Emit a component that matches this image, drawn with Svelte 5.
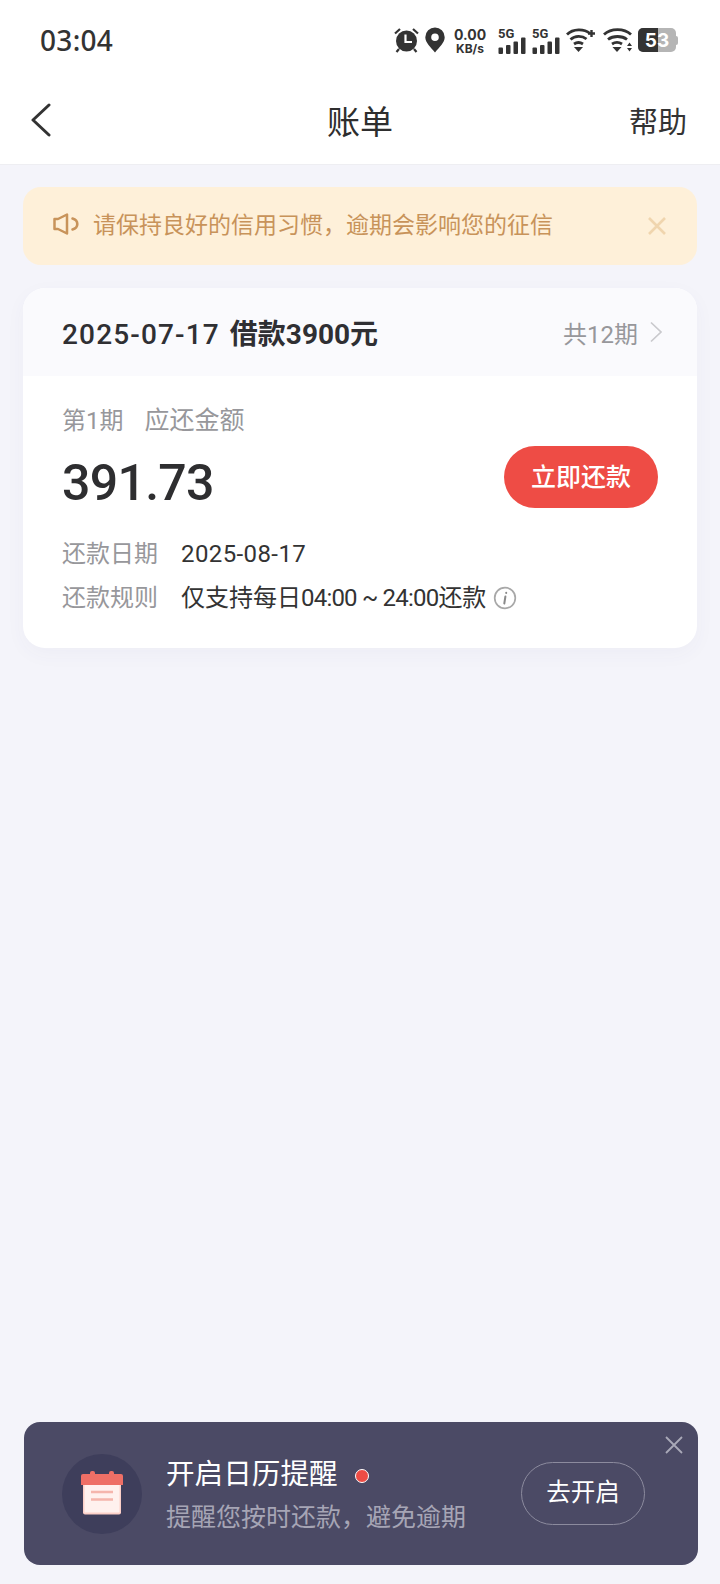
<script>
  const rows = [
    { label: "还款日期", parts: [{ text: "2025-08-17", num: true }] },
    {
      label: "还款规则",
      parts: [{ text: "仅支持每日" }, { text: "04:00 ~ 24:00", num: true }, { text: "还款" }],
      info: true
    }
  ];
</script>

<div class="page">
  <div class="status">
    <span class="time">03:04</span>
    <div class="status-icons">
      <svg class="alarm" width="25" height="26" viewBox="0 0 25 26" fill="#333">
        <circle cx="12.500" cy="14" r="10.500"/>
        <path d="M1 6.500L6 2M24 6.500L19 2M5 22l-2.500 3M20 22l2.500 3" stroke="#333" stroke-width="2.200" fill="none"/>
        <path d="M11.500 7.500v7.500h6.500" stroke="#fff" stroke-width="2.200" fill="none"/>
      </svg>
      <svg class="pin" width="20" height="26" viewBox="0 0 20 26" fill="#333">
        <path fill-rule="evenodd" d="M10 .5a9.700 9.700 0 0 1 9.700 9.700c0 5.500-5.500 10-9.700 15.300C5.800 20.200.3 15.700.3 10.200A9.700 9.700 0 0 1 10 .5zm0 6a3.800 3.800 0 1 0 0 7.600 3.800 3.800 0 0 0 0-7.600z"/>
      </svg>
      <div class="speed"><span>0.00</span><span class="unit">KB/s</span></div>
      {#each [0, 1] as sim}
        <div class="signal">
          <span>5G</span>
          <svg width="28" height="17" viewBox="0 0 28 17" fill="#333">
            <rect x="0.500" y="10.500" width="4.500" height="6.500" rx="1"/>
            <rect x="8" y="8" width="4.500" height="9" rx="1"/>
            <rect x="15.500" y="4.500" width="4.500" height="12.500" rx="1"/>
            <rect x="23" y="0.500" width="4.500" height="16.500" rx="1"/>
          </svg>
        </div>
      {/each}
      <svg class="wifi" width="29" height="26" viewBox="0 0 29 26" fill="none" stroke="#333" stroke-width="2.800">
        <path d="M1 7.500C7 1.500 18 1.500 24 6.500"/>
        <path d="M4.500 12.500C9 8.500 16 8.500 20.500 12"/>
        <path d="M8 17c3-2 6-2 9 0"/>
        <path d="M8 20h9l-4.500 5z" fill="#333" stroke="none"/>
        <path d="M22 6.500h7M25.500 3v7" stroke-width="2.400"/>
      </svg>
      <svg class="wifi wifi-two" width="29" height="26" viewBox="0 0 29 26" fill="none" stroke="#333" stroke-width="2.800">
        <path d="M1 7.500C8 1 21 1 28 7.500"/>
        <path d="M5 12.500C10 8.500 19 8.500 24 12.500"/>
        <path d="M9 17c3-2 7-2 10 0"/>
        <path d="M9.500 20h9l-4.500 5z" fill="#333" stroke="none"/>
        <path d="M24 19l2.500-3.500 2.500 3.500zM24 21l2.500 3.500 2.500-3.500z" fill="#333" stroke="none"/>
      </svg>
      <div class="battery">
        <div class="batt-body"><span class="batt-fill"></span><span class="batt-num">53</span></div>
        <span class="batt-cap"></span>
      </div>
    </div>
  </div>

  <header class="nav">
    <svg class="back" width="24" height="34" viewBox="0 0 24 34" fill="none" stroke="#333" stroke-width="3" stroke-linecap="round" stroke-linejoin="round">
      <path d="M20 2L4 17l16 15"/>
    </svg>
    <h1>账单</h1>
    <span class="help">帮助</span>
  </header>

  <main class="content">
    <div class="notice">
      <svg class="speaker" width="27" height="22" viewBox="0 0 27 22" fill="none" stroke="#c8935a" stroke-width="2.500" stroke-linejoin="round" stroke-linecap="round">
        <path d="M1.500 6h3.500L14 1.500v19L5 16H1.500z"/>
        <path d="M19.500 5.500c3.500 1 4.800 3 4.800 5.500s-1.300 4.500-4.800 5.500" stroke-width="2.600"/>
      </svg>
      <span class="notice-text">请保持良好的信用习惯，逾期会影响您的征信</span>
      <svg class="notice-close" width="20" height="20" viewBox="0 0 20 20" stroke="#f0d5ae" stroke-width="2.600" fill="none">
        <path d="M2 2l16 16M18 2L2 18"/>
      </svg>
    </div>

    <section class="card">
      <div class="card-head">
        <div class="loan"><span class="loan-date">2025-07-17</span><b>借款3900元</b></div>
        <div class="periods">
          <span>共12期</span>
          <svg width="14" height="22" viewBox="0 0 14 22" fill="none" stroke="#c9c9cd" stroke-width="1.700"><path d="M2 1.500L12 11 2 20.500"/></svg>
        </div>
      </div>
      <div class="card-body">
        <div class="due-label"><span>第1期</span><span class="due-name">应还金额</span></div>
        <div class="due-row">
          <span class="amount">391.73</span>
          <button class="pay">立即还款</button>
        </div>
        <div class="rows">
          {#each rows as row}
            <div class="row">
              <span class="row-label">{row.label}</span>
              <span class="row-value">
                {#each row.parts as part}<span class:num={part.num}>{part.text}</span>{/each}
              </span>
              {#if row.info}
                <svg class="info" width="24" height="24" viewBox="0 0 24 24" fill="none">
                  <circle cx="12" cy="12" r="10.300" stroke="#a8a8a8" stroke-width="1.700"/>
                  <path d="M13.200 6.800v.2M12.400 10.500l-1.100 7" stroke="#8a8a8a" stroke-width="2" stroke-linecap="round"/>
                </svg>
              {/if}
            </div>
          {/each}
        </div>
      </div>
    </section>
  </main>

  <aside class="reminder">
    <div class="cal-circle">
      <svg class="cal" width="42" height="44" viewBox="0 0 42 44">
        <rect x="2" y="10" width="38" height="33.500" rx="2" fill="#fcd0c8"/>
        <rect x="3.500" y="10" width="35" height="31.500" fill="#fff1ee"/>
        <path d="M0 5a2 2 0 0 1 2-2h38a2 2 0 0 1 2 2v9H0z" fill="#ee6f66"/>
        <rect x="9" y="0" width="5" height="6" rx="2" fill="#ee6f66"/>
        <rect x="28" y="0" width="5" height="6" rx="2" fill="#ee6f66"/>
        <path d="M10 21h22M10 28.500h22" stroke="#f5b5ac" stroke-width="2.600"/>
      </svg>
    </div>
    <div class="reminder-text">
      <div class="reminder-title"><span>开启日历提醒</span><i class="dot"></i></div>
      <div class="reminder-sub">提醒您按时还款，避免逾期</div>
    </div>
    <button class="enable">去开启</button>
    <svg class="reminder-close" width="20" height="20" viewBox="0 0 20 20" stroke="#a9a9b8" stroke-width="1.800" fill="none">
      <path d="M2 2l16 16M18 2L2 18"/>
    </svg>
  </aside>
</div>

<style>
  :global(body) {
    margin: 0;
    background: #f4f4fa;
  }

  .page {
    width: 720px;
    height: 1584px;
    display: flex;
    flex-direction: column;
    background: #f4f4fa;
    color: #333;
    font-family: "Roboto", "Noto Sans CJK SC", sans-serif;
    overflow: hidden;
  }

  /* status bar */
  .status {
    height: 80px;
    box-sizing: border-box;
    padding: 0 42px 0 40px;
    background: #fff;
    display: flex;
    align-items: center;
    justify-content: space-between;
  }
  .time {
    font-family: "Noto Sans", sans-serif;
    font-size: 28px;
    font-weight: 500;
    letter-spacing: 0.300px;
    color: #333;
  }
  .status-icons {
    display: flex;
    align-items: center;
  }
  .pin {
    margin-left: 6px;
  }
  .speed {
    display: flex;
    flex-direction: column;
    align-items: center;
    width: 32px;
    margin: 0 12px 0 9px;
    font-family: "Inter", sans-serif;
    font-weight: 700;
    font-size: 14px;
    line-height: 15px;
    padding-top: 2px;
  }
  .speed .unit {
    font-size: 12px;
    line-height: 14px;
  }
  .signal {
    position: relative;
    width: 28px;
    height: 25px;
    margin-top: 2px;
    margin-right: 6px;
    display: flex;
    align-items: flex-end;
  }
  .signal span {
    position: absolute;
    left: 0;
    top: -2px;
    font-size: 13px;
    line-height: 13px;
    font-weight: 700;
  }
  .wifi-two {
    margin-left: 8px;
  }
  .battery {
    display: flex;
    align-items: center;
    margin-left: 6px;
  }
  .batt-body {
    position: relative;
    width: 38px;
    height: 24px;
    background: #b5b5b5;
    border-radius: 5px;
    overflow: hidden;
    display: flex;
    align-items: center;
    justify-content: center;
  }
  .batt-fill {
    position: absolute;
    left: 0;
    top: 0;
    bottom: 0;
    width: 20px;
    background: #333;
  }
  .batt-num {
    position: relative;
    color: #fff;
    font-size: 19px;
    font-weight: 700;
    font-family: "Inter", sans-serif;
  }
  .batt-cap {
    width: 2px;
    height: 9px;
    background: #b5b5b5;
    border-radius: 0 2px 2px 0;
  }

  /* nav */
  .nav {
    position: relative;
    height: 85px;
    box-sizing: border-box;
    background: #fff;
    border-bottom: 1px solid #eeeef2;
    display: flex;
    align-items: center;
    justify-content: center;
  }
  .back {
    position: absolute;
    left: 29px;
    top: 23px;
  }
  h1 {
    margin: 0 0 4px 0;
    font-size: 33px;
    font-weight: 400;
    line-height: 40px;
    color: #2e2e2e;
    font-family: "Noto Sans CJK SC", sans-serif;
  }
  .help {
    position: absolute;
    right: 33px;
    top: 23px;
    font-size: 29px;
    line-height: 40px;
    color: #333;
  }

  .content {
    flex: 1;
    padding: 22px 23px 0 23px;
    display: flex;
    flex-direction: column;
    gap: 23px;
  }

  .notice {
    height: 78px;
    box-sizing: border-box;
    padding: 0 30px 0 30px;
    background: #fef0d9;
    border-radius: 18px;
    display: flex;
    align-items: center;
    color: #c8935a;
  }
  .speaker {
    margin-bottom: 5px;
  }
  .notice-text {
    flex: 1;
    margin-left: 13px;
    font-size: 23px;
    line-height: 32px;
  }

  .card {
    background: #fff;
    border-radius: 22px;
    box-shadow: 0 6px 20px rgba(80, 80, 130, 0.04);
    overflow: hidden;
  }
  .card-head {
    height: 88px;
    box-sizing: border-box;
    padding: 0 34px 0 39px;
    background: #fafafd;
    display: flex;
    align-items: center;
    justify-content: space-between;
  }
  .loan {
    display: flex;
    align-items: baseline;
    font-size: 28px;
    color: #2f2f33;
    font-weight: 500;
  }
  .loan-date {
    letter-spacing: 1.150px;
    margin-right: 10px;
  }
  .loan b {
    font-weight: 700;
  }
  .periods {
    display: flex;
    align-items: center;
    gap: 11px;
    font-size: 24px;
    color: #97979b;
  }
  .card-body {
    padding: 28px 39px 33px 39px;
  }
  .due-label {
    display: flex;
    gap: 21px;
    font-size: 24px;
    line-height: 34px;
    color: #97979b;
  }
  .due-name {
    font-size: 25px;
  }
  .due-row {
    display: flex;
    align-items: center;
    justify-content: space-between;
    margin-top: 10px;
    margin-bottom: 19px;
  }
  .amount {
    font-size: 50px;
    line-height: 70px;
    font-weight: 500;
    letter-spacing: -0.700px;
    color: #2e2e30;
  }
  .pay {
    width: 154px;
    height: 62px;
    margin-top: -12px;
    border: none;
    border-radius: 31px;
    background: #ee4c45;
    color: #fff;
    font-family: inherit;
    font-size: 25px;
    font-weight: 500;
    padding: 0 0 4px 0;
  }
  .rows {
    display: flex;
    flex-direction: column;
    gap: 10px;
  }
  .row {
    display: flex;
    align-items: baseline;
    height: 34px;
    line-height: 34px;
    font-size: 24px;
  }
  .row-label {
    width: 119px;
    color: #97979b;
  }
  .row-value {
    color: #333;
  }
  .num {
    letter-spacing: 0.400px;
  }
  .row:last-child .num {
    letter-spacing: -0.800px;
  }
  .info {
    align-self: center;
    margin-left: 7px;
  }

  /* bottom banner */
  .reminder {
    position: relative;
    height: 143px;
    margin: 0 22px 19px 24px;
    box-sizing: border-box;
    padding: 0 53px 0 38px;
    border-radius: 16px;
    background: #4b4a65;
    display: flex;
    align-items: center;
  }
  .cal-circle {
    width: 80px;
    height: 80px;
    border-radius: 50%;
    background: #3e3e5b;
    display: flex;
    align-items: center;
    justify-content: center;
  }
  .cal {
    margin-bottom: 2px;
  }
  .reminder-text {
    flex: 1;
    margin-left: 24px;
    padding-top: 2px;
  }
  .reminder-title {
    display: flex;
    align-items: center;
    color: #fff;
    font-size: 28.600px;
    line-height: 40px;
  }
  .dot {
    width: 12px;
    height: 12px;
    margin-left: 17px;
    margin-top: 4px;
    border-radius: 50%;
    background: #ee4c45;
    border: 1.500px solid #fff;
  }
  .reminder-sub {
    margin-top: 7px;
    color: #a6a5b5;
    font-size: 25px;
    line-height: 34px;
  }
  .enable {
    width: 124px;
    height: 63px;
    border: 1px solid #8c8b9e;
    border-radius: 32px;
    background: transparent;
    color: #fff;
    font-family: inherit;
    font-size: 24.500px;
    padding: 0 0 6px 0;
  }
  .reminder-close {
    position: absolute;
    right: 14px;
    top: 13px;
  }
</style>
